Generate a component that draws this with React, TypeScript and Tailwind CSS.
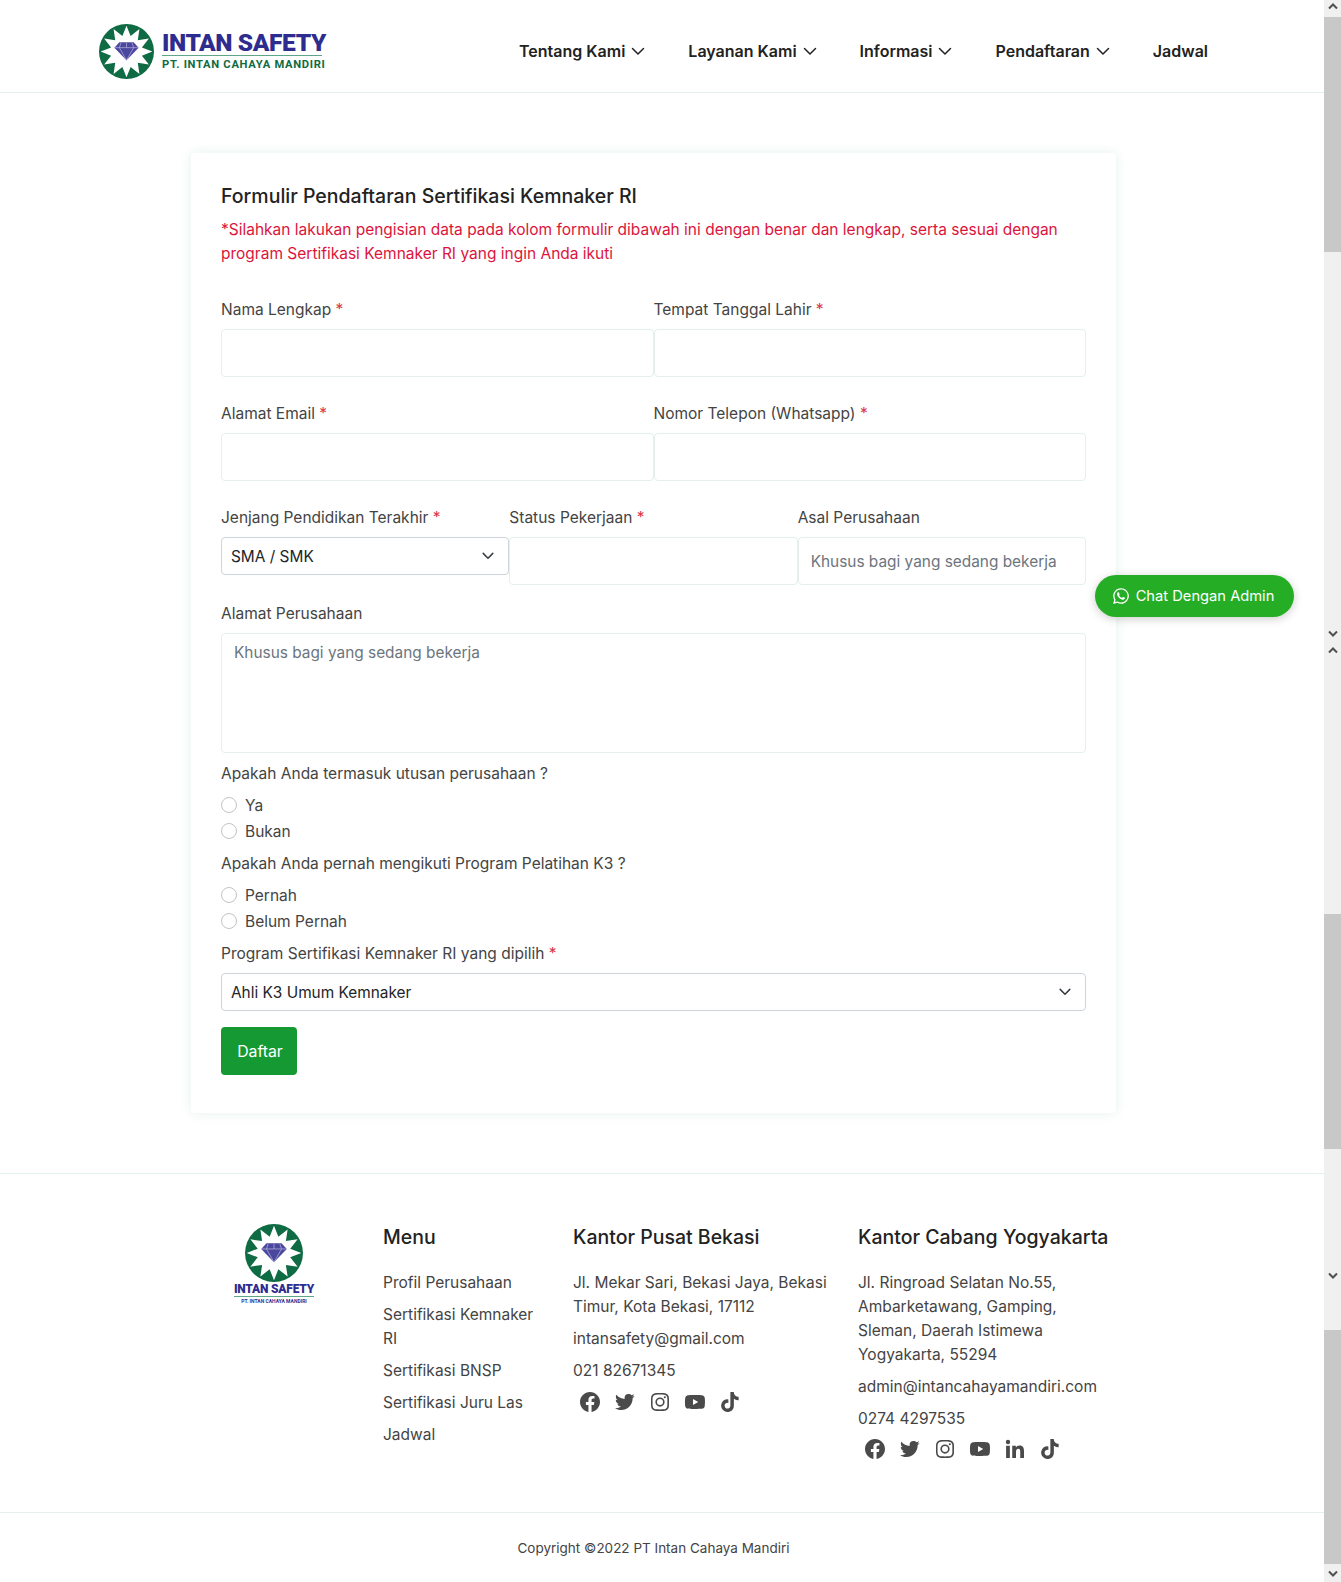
import { BiLogoFacebookCircle, BiLogoInstagram, BiLogoLinkedin, BiLogoTiktok, BiLogoTwitter, BiLogoYoutube } from 'react-icons/bi';
import { FaWhatsapp } from 'react-icons/fa';
import type { IconType } from 'react-icons';

const NAV = [
  { label: 'Tentang Kami', caret: true },
  { label: 'Layanan Kami', caret: true },
  { label: 'Informasi', caret: true },
  { label: 'Pendaftaran', caret: true },
  { label: 'Jadwal', caret: false },
];

const MENU = ['Profil Perusahaan', 'Sertifikasi Kemnaker RI', 'Sertifikasi BNSP', 'Sertifikasi Juru Las', 'Jadwal'];

const fieldClass = 'h-12 w-full rounded border border-[#e3f0ec] bg-white px-3 text-[15.4px] outline-none placeholder:text-[#6c757d]';
const selectClass = 'h-[38px] w-full appearance-none rounded border border-[#ced4da] bg-white pl-[9px] pr-9 pt-px text-[15.4px] text-[#212529] outline-none';

function starPoints() {
  const pts: string[] = [];
  for (let i = 0; i < 24; i++) {
    const r = i % 2 === 0 ? 47 : 29;
    const a = (i * Math.PI) / 12 - Math.PI / 2;
    pts.push(`${(50 + r * Math.cos(a)).toFixed(1)},${(50 + r * Math.sin(a)).toFixed(1)}`);
  }
  return pts.join(' ');
}

function LogoMark({ className }: { className: string }) {
  return (
    <svg viewBox="0 0 100 100" className={className}>
      <circle cx="50" cy="50" r="50" fill="#0f6b43" />
      <polygon points={starPoints()} fill="#fff" />
      <path d="M28 43 L37 33 H63 L72 43 L50 66 Z" fill="#4b479f" />
      <path d="M28 43 H72 M40 34 L37 43 L50 66 L63 43 L60 34 M50 34 V43" stroke="#b9b7de" strokeWidth="1.2" fill="none" />
    </svg>
  );
}

function Req() {
  return <span className="text-[#dc3545]"> *</span>;
}

function Field({ label, required, placeholder }: { label: string; required?: boolean; placeholder?: string }) {
  return (
    <div>
      <label className="mb-[6px] block leading-[26px]">
        {label}
        {required && <Req />}
      </label>
      <input className={fieldClass} placeholder={placeholder} />
    </div>
  );
}

function SelectBox({ value }: { value: string }) {
  return (
    <div className="relative">
      <select defaultValue={value} className={selectClass}>
        <option>{value}</option>
      </select>
      <svg viewBox="0 0 16 16" className="pointer-events-none absolute right-[13px] top-[12px] h-[14px] w-4" fill="none" stroke="#343a40" strokeWidth="1.7" strokeLinecap="round" strokeLinejoin="round">
        <path d="m2.5 5 5.5 5.5L13.5 5" />
      </svg>
    </div>
  );
}

function Radio({ label }: { label: string }) {
  return (
    <label className="flex h-[26px] items-center gap-2 leading-6">
      <input type="radio" className="h-4 w-4 appearance-none rounded-full border border-[#bfc4c9] bg-white" />
      <span className="pt-[2px]">{label}</span>
    </label>
  );
}

function Socials({ icons }: { icons: IconType[] }) {
  return (
    <div className="flex gap-[11px] pl-[5px] text-[#4a4a4a]">
      {icons.map((Icon, i) => (
        <Icon key={i} className="h-6 w-6" />
      ))}
    </div>
  );
}

export default function App() {
  return (
    <div className="relative flex h-[1582px] overflow-hidden bg-white font-['Inter','Noto_Sans',sans-serif] text-[15.5px] text-[#444444]">
      <div className="min-w-0 flex-1">
        <header className="flex h-[93px] items-center border-b border-[#e3f0ec] pl-[99px] pt-[11px]">
          <div className="flex items-center gap-2">
            <LogoMark className="h-[55px] w-[55px]" />
            <div className="w-[164px]">
              <div className="whitespace-nowrap font-['Roboto',sans-serif] text-[24.5px] font-black leading-[22px] tracking-[-0.4px] text-[#2e2d8f]">INTAN SAFETY</div>
              <div className="mt-px h-px w-[160px] bg-[#5fa58a]" />
              <div className="mt-[3px] whitespace-nowrap font-['Roboto',sans-serif] text-[11.2px] font-bold leading-3 tracking-[0.7px] text-[#0f6b43]">PT. INTAN CAHAYA MANDIRI</div>
            </div>
          </div>
          <nav className="ml-[193px] flex gap-[43px] pb-[2px]">
            {NAV.map((n) => (
              <a key={n.label} className="flex items-center gap-[6px] text-[16px] font-semibold text-[#222222]">
                {n.label}
                {n.caret && (
                  <svg viewBox="0 0 14 14" className="h-[14px] w-[14px]" fill="none" stroke="#222222" strokeWidth="1.5" strokeLinecap="round" strokeLinejoin="round">
                    <path d="M1.5 4.5 7 10l5.5-5.5" />
                  </svg>
                )}
              </a>
            ))}
          </nav>
        </header>

        <main className="ml-[191px] mt-[60px] h-[960px] w-[925px] rounded bg-white p-[30px] pt-[31px] shadow-[0_0_12px_rgba(60,160,120,0.14)]">
          <h1 className="text-[19.5px] font-medium leading-6 text-[#222222]">Formulir Pendaftaran Sertifikasi Kemnaker RI</h1>
          <p className="mt-[10px] leading-6 text-[#dc143c]">
            *Silahkan lakukan pengisian data pada kolom formulir dibawah ini dengan benar dan lengkap, serta sesuai dengan program Sertifikasi Kemnaker RI yang ingin Anda ikuti
          </p>

          <div className="mt-[31px] grid grid-cols-2">
            <Field label="Nama Lengkap" required />
            <Field label="Tempat Tanggal Lahir" required />
          </div>
          <div className="mt-6 grid grid-cols-2">
            <Field label="Alamat Email" required />
            <Field label="Nomor Telepon (Whatsapp)" required />
          </div>
          <div className="mt-6 grid grid-cols-3">
            <div>
              <label className="mb-[6px] block leading-[26px]">
                Jenjang Pendidikan Terakhir
                <Req />
              </label>
              <SelectBox value="SMA / SMK" />
            </div>
            <Field label="Status Pekerjaan" required />
            <Field label="Asal Perusahaan" placeholder="Khusus bagi yang sedang bekerja" />
          </div>

          <label className="mt-4 block leading-[26px]">Alamat Perusahaan</label>
          <textarea
            className="mt-[6px] block h-[120px] w-full resize-none rounded border border-[#e3f0ec] px-3 pb-[6px] pt-[7px] text-[15.4px] leading-6 outline-none placeholder:text-[#6c757d]"
            placeholder="Khusus bagi yang sedang bekerja"
          />

          <p className="mt-[9px] leading-6">Apakah Anda termasuk utusan perusahaan ?</p>
          <div className="mt-[6px]">
            <Radio label="Ya" />
            <Radio label="Bukan" />
          </div>
          <p className="mt-[8px] leading-6">Apakah Anda pernah mengikuti Program Pelatihan K3 ?</p>
          <div className="mt-[6px]">
            <Radio label="Pernah" />
            <Radio label="Belum Pernah" />
          </div>
          <label className="mb-[7px] mt-[8px] block leading-6">
            Program Sertifikasi Kemnaker RI yang dipilih
            <Req />
          </label>
          <SelectBox value="Ahli K3 Umum Kemnaker" />
          <button className="mt-4 h-12 w-[76px] rounded-sm bg-[#159a33] pl-[2px] pt-[2px] text-[15.8px] text-white">Daftar</button>
        </main>

        <footer className="mt-[60px] border-t border-[#e3f0ec]">
          <div className="flex h-[338px] pl-[233px] pt-[51px]">
            <div className="w-[150px]">
              <div className="-mt-px flex w-[82px] flex-col items-center">
                <LogoMark className="h-[58px] w-[58px]" />
                <div className="mt-[2px] whitespace-nowrap font-['Roboto',sans-serif] text-[12px] font-black leading-[11px] tracking-[-0.2px] text-[#2e2d8f]">INTAN SAFETY</div>
                <div className="mt-px h-px w-[80px] bg-[#5fa58a]" />
                <div className="mt-px whitespace-nowrap font-['Roboto',sans-serif] text-[5px] font-bold leading-[6px] text-[#2e2d8f]">PT. INTAN CAHAYA MANDIRI</div>
              </div>
            </div>
            <div className="w-[190px] pr-6">
              <h4 className="text-[19.5px] font-medium leading-6 text-[#222222]">Menu</h4>
              <ul className="mt-[22px] space-y-2 leading-6">
                {MENU.map((m) => (
                  <li key={m}>{m}</li>
                ))}
              </ul>
            </div>
            <div className="w-[285px] pr-6">
              <h4 className="text-[19.5px] font-medium leading-6 text-[#222222]">Kantor Pusat Bekasi</h4>
              <div className="mt-[22px] space-y-2 leading-6">
                <p>Jl. Mekar Sari, Bekasi Jaya, Bekasi Timur, Kota Bekasi, 17112</p>
                <p>intansafety@gmail.com</p>
                <p>021 82671345</p>
              </div>
              <div className="mt-[7px]">
                <Socials icons={[BiLogoFacebookCircle, BiLogoTwitter, BiLogoInstagram, BiLogoYoutube, BiLogoTiktok]} />
              </div>
            </div>
            <div className="w-[258px]">
              <h4 className="whitespace-nowrap text-[19.5px] font-medium leading-6 text-[#222222]">Kantor Cabang Yogyakarta</h4>
              <div className="mt-[22px] space-y-2 leading-6">
                <p>Jl. Ringroad Selatan No.55, Ambarketawang, Gamping, Sleman, Daerah Istimewa Yogyakarta, 55294</p>
                <p>admin@intancahayamandiri.com</p>
                <p>0274 4297535</p>
              </div>
              <div className="mt-[6px]">
                <Socials icons={[BiLogoFacebookCircle, BiLogoTwitter, BiLogoInstagram, BiLogoYoutube, BiLogoLinkedin, BiLogoTiktok]} />
              </div>
            </div>
          </div>
          <div className="flex h-[70px] items-center justify-center border-t border-[#e3f0ec] pr-[17px] pt-px text-[13.5px]">Copyright ©2022 PT Intan Cahaya Mandiri</div>
        </footer>
      </div>

      <aside className="flex w-[17px] shrink-0 flex-col bg-[#f0f0f0]">
        <div className="h-[17px] shrink-0" />
        <div className="h-[235px] shrink-0 bg-[#c8c8c8]" />
        <div className="h-[662px] shrink-0" />
        <div className="h-[235px] shrink-0 bg-[#c8c8c8]" />
        <div className="h-[181px] shrink-0" />
        <div className="h-[234px] shrink-0 bg-[#c8c8c8]" />
      </aside>

      {[
        { y: 2, up: true },
        { y: 630, up: false },
        { y: 646, up: true },
        { y: 1272, up: false },
        { y: 1570, up: false },
      ].map((a) => (
        <svg key={a.y} viewBox="0 0 10 8" className="absolute right-[3px] h-2 w-[10px]" style={{ top: a.y }} fill="none" stroke="#505050" strokeWidth="2">
          <path d={a.up ? 'M1 6.5 5 2.5l4 4' : 'M1 1.5l4 4 4-4'} />
        </svg>
      ))}

      <a className="absolute left-[1095px] top-[575px] flex h-[42px] w-[199px] items-center justify-center gap-[6px] rounded-full bg-[#25ad25] pr-[3px] text-[14.7px] text-white shadow-[0_2px_10px_rgba(0,0,0,0.2)]">
        <FaWhatsapp className="h-[18px] w-[18px]" />
        Chat Dengan Admin
      </a>
    </div>
  );
}
